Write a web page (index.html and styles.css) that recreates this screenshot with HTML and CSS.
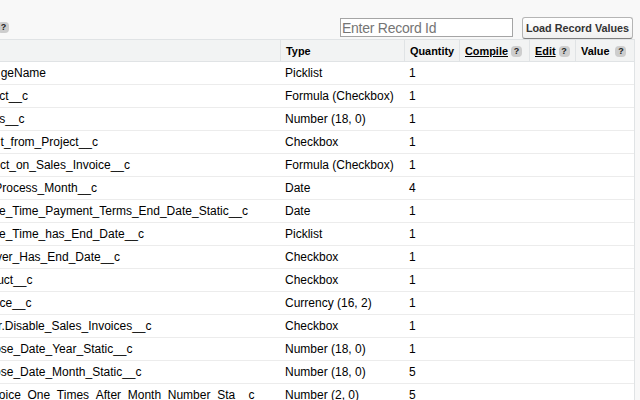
FILE: index.html
```html
<!DOCTYPE html>
<html lang="en">
<head>
<meta charset="utf-8">
<title>Record values</title>
<link rel="stylesheet" href="styles.css">
</head>
<body>
<header class="toolbar">
  <span class="help help-left">?</span>
  <input class="record" type="text" placeholder="Enter Record Id">
  <button class="load"><span class="load-label">Load Record Values</span></button>
</header>
<main class="grid">
  <div class="row head">
    <div class="cell"></div>
    <div class="cell"><span>Type</span></div>
    <div class="cell"><span>Quantity</span></div>
    <div class="cell"><span class="link">Compile</span><span class="help">?</span></div>
    <div class="cell"><span class="link">Edit</span><span class="help">?</span></div>
    <div class="cell value"><span>Value</span><span class="help">?</span></div>
  </div>
  <div id="rows"></div>
</main>
<script src="rows.js"></script>
</body>
</html>
```
FILE: styles.css
```css
* { box-sizing: border-box; }
body {
  margin: 0;
  width: 640px;
  height: 400px;
  overflow: hidden;
  background: #f8f8f8;
  color: #000;
  font: 12px "Liberation Sans", Arial, sans-serif;
}
.toolbar { display: flex; height: 39px; }
.help {
  flex: none;
  width: 11px;
  height: 11px;
  border-radius: 4px;
  background: #cdcdcd;
  color: #222;
  font: bold 9px/11px "Liberation Sans", Arial, sans-serif;
  text-align: center;
}
.help-left { margin: 22px 0 0 -2px; }
.record {
  width: 173px;
  height: 19px;
  margin: 18px 9px 0 331px;
  padding: 0 1px;
  border: 1px solid #a5a5a5;
  background: #fff;
  font: 14px "Liberation Sans", Arial, sans-serif;
  letter-spacing: -0.25px;
}
.record::placeholder { color: #757575; }
.load {
  width: 111px;
  height: 22px;
  margin-top: 17px;
  padding: 0;
  border: 1px solid #b5b5b5;
  border-bottom-color: #7f7f7f;
  border-radius: 3px;
  background: linear-gradient(#fff, #f0f0f0);
  color: #333;
  font: bold 10.8px/20px "Liberation Sans", Arial, sans-serif;
  white-space: nowrap;
}
.grid {
  width: 635px;
  border-top: 1px solid #e0e3e5;
  border-right: 1px solid #e0e3e5;
  background: #fff;
}
.row {
  display: grid;
  grid-template-columns: 280px 124px 55px 70px 46px 59px;
  height: 23px;
  border-bottom: 1px solid #ececec;
  line-height: 21px;
  white-space: nowrap;
}
.head {
  height: 22px;
  background: #f2f3f3;
  border-color: #e0e3e5;
  font-size: 10.9px;
  font-weight: bold;
  line-height: 22px;
}
.cell { display: flex; align-items: center; min-width: 0; }
.head .cell + .cell { border-left: 1px solid #e0e3e5; padding-left: 5px; }
.head .help { margin-left: 3px; }
.head .value .help { margin-left: 6px; }
.link { text-decoration: underline; }
.name { display: flex; justify-content: flex-end; }
.type { padding-left: 5px; }
.quantity { padding-left: 5px; }
```
FILE: rows.js
```javascript
const rows = [
  ["geName", 46, "Picklist", 1],
  ["ct__c", 28, "Formula (Checkbox)", 1],
  ["s__c", 24.5, "Number (18, 0)", 1],
  ["t_from_Project__c", 98, "Checkbox", 1],
  ["ct_on_Sales_Invoice__c", 130, "Formula (Checkbox)", 1],
  ["Process_Month__c", 97, "Date", 4],
  ["e_Time_Payment_Terms_End_Date_Static__c", 248, "Date", 1],
  ["e_Time_has_End_Date__c", 144, "Picklist", 1],
  ["ver_Has_End_Date__c", 120, "Checkbox", 1],
  ["uct__c", 32.5, "Checkbox", 1],
  ["ce__c", 31.5, "Currency (16, 2)", 1],
  ["r.Disable_Sales_Invoices__c", 151.5, "Checkbox", 1],
  ["ose_Date_Year_Static__c", 132.5, "Number (18, 0)", 1],
  ["ose_Date_Month_Static__c", 141.5, "Number (18, 0)", 5],
  ["oice_One_Times_After_Month_Number_Sta__c", 254.5, "Number (2, 0)", 5]
];
document.getElementById("rows").innerHTML = rows.map(([name, end, type, quantity]) =>
  `<div class="row"><div class="cell"><span class="name" style="width:${end}px"><span>${name}</span></span></div>` +
  `<div class="cell type"><span>${type}</span></div><div class="cell quantity">${quantity}</div></div>`
).join("");
```
